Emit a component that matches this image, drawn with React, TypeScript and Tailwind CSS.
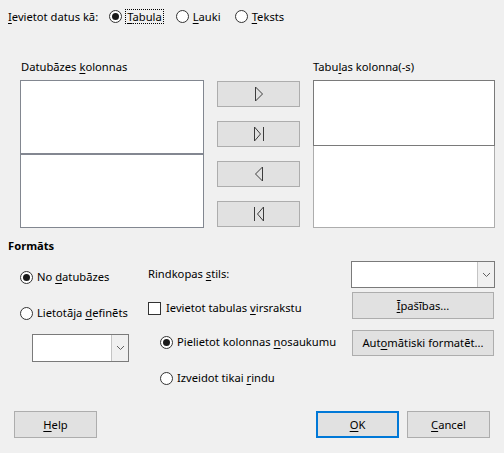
import React from "react";

const Radio = ({ checked }: { checked?: boolean }) => (
  <span className="flex h-[13px] w-[13px] shrink-0 items-center justify-center rounded-full border border-[#333333] bg-white">
    {checked && <span className="h-[7px] w-[7px] rounded-full bg-[#1a1a1a]" />}
  </span>
);

const Btn = ({ children, className = "" }: { children: React.ReactNode; className?: string }) => (
  <div
    className={`flex items-center justify-center border border-[#adadad] bg-[#e1e1e1] text-black ${className}`}
  >
    {children}
  </div>
);

const Combo = ({ className = "" }: { className?: string }) => (
  <div className={`flex border border-[#7a7a7a] bg-white ${className}`}>
    <div className="flex-1" />
    <div className="flex w-[17px] items-center justify-center border-l border-[#c4c4c4] bg-[#f0f0f0]">
      <svg width="9" height="6" viewBox="0 0 9 6">
        <path d="M1 1 L4.5 4.5 L8 1" fill="none" stroke="#606060" strokeWidth="1" />
      </svg>
    </div>
  </div>
);

const Arrow = ({ kind }: { kind: "r" | "rr" | "l" | "ll" }) => (
  <svg width="14" height="16" viewBox="0 0 14 16">
    {kind === "r" && <path d="M3.5 1 L3.5 15 L10.5 8 Z" fill="none" stroke="#3c3c3c" />}
    {kind === "rr" && (
      <>
        <path d="M2.5 1 L2.5 15 L8.5 8 Z" fill="none" stroke="#3c3c3c" />
        <path d="M11.5 1 L11.5 15" stroke="#3c3c3c" />
      </>
    )}
    {kind === "l" && <path d="M10.5 1 L10.5 15 L3.5 8 Z" fill="none" stroke="#3c3c3c" />}
    {kind === "ll" && (
      <>
        <path d="M11.5 1 L11.5 15 L5.5 8 Z" fill="none" stroke="#3c3c3c" />
        <path d="M2.5 1 L2.5 15" stroke="#3c3c3c" />
      </>
    )}
  </svg>
);

const U = ({ children }: { children: React.ReactNode }) => (
  <span className="underline decoration-1 underline-offset-[2px]">{children}</span>
);

export default function App() {
  return (
    <div
      className="flex h-[453px] w-[504px] flex-col bg-[#f0f0f0] text-[11.2px] leading-[16px] text-black"
      style={{ fontFamily: '"Noto Sans", "Open Sans", sans-serif' }}
    >
      {/* insert as */}
      <div className="flex h-[33px] items-center pl-[8px]">
        <span>
          <U>I</U>evietot datus kā:
        </span>
        <span className="ml-[11px] flex items-center gap-[3px]">
          <Radio checked />
          <span className="border border-dotted border-black px-[1px] leading-[13px]">
            <U>T</U>abula
          </span>
        </span>
        <span className="ml-[12px] flex items-center gap-[4px]">
          <Radio />
          <span>
            <U>L</U>auki
          </span>
        </span>
        <span className="ml-[14px] flex items-center gap-[4px]">
          <Radio />
          <span>
            <U>T</U>eksts
          </span>
        </span>
      </div>

      {/* columns */}
      <div className="mt-[26px] flex pl-[20px]">
        <div className="flex flex-col">
          <div className="mb-[5px] pl-[1px]">
            Datubāzes <U>k</U>olonnas
          </div>
          <div className="flex h-[148px] w-[184px] flex-col border border-[#828790] bg-white">
            <div className="h-[72px]" />
            <div className="h-[2px] bg-[#838791]" />
          </div>
        </div>

        <div className="ml-[13px] mt-[22px] flex flex-col gap-[14px]">
          <Btn className="h-[26px] w-[83px]">
            <Arrow kind="r" />
          </Btn>
          <Btn className="h-[26px] w-[83px]">
            <Arrow kind="rr" />
          </Btn>
          <Btn className="h-[26px] w-[83px]">
            <Arrow kind="l" />
          </Btn>
          <Btn className="h-[26px] w-[83px]">
            <Arrow kind="ll" />
          </Btn>
        </div>

        <div className="ml-[13px] flex flex-col">
          <div className="mb-[5px]">
            Tabu<U>l</U>as kolonna(-s)
          </div>
          <div className="h-[66px] w-[182px] border border-[#7a7a7a] bg-white" />
          <div className="h-[82px] w-[182px] border border-t-0 border-[#adadad] bg-white" />
        </div>
      </div>

      {/* format */}
      <div className="mt-[10px] pl-[8px] font-bold">Formāts</div>
      <div className="flex">
        <div className="flex w-[148px] flex-col pl-[20px]">
          <div className="mt-[15px] flex items-center gap-[4px]">
            <Radio checked />
            <span>
              No <U>d</U>atubāzes
            </span>
          </div>
          <div className="mt-[20px] flex items-center gap-[4px]">
            <Radio />
            <span>
              Lietotāja <U>d</U>efinēts
            </span>
          </div>
          <Combo className="ml-[12px] mt-[13px] h-[28px] w-[97px]" />
        </div>

        <div className="flex w-[203px] flex-col">
          <div className="mt-[12px]">
            Rindkopas <U>s</U>tils:
          </div>
          <div className="mt-[18px] flex items-center gap-[5px]">
            <span className="h-[13px] w-[13px] border border-[#333333] bg-white" />
            <span>
              Ievietot tabulas <U>v</U>irsrakstu
            </span>
          </div>
          <div className="ml-[12px] mt-[18px] flex items-center gap-[4px]">
            <Radio checked />
            <span>
              Pielietot kolonnas <U>n</U>osaukumu
            </span>
          </div>
          <div className="ml-[12px] mt-[20px] flex items-center gap-[4px]">
            <Radio />
            <span>
              Izveidot tikai <U>r</U>indu
            </span>
          </div>
        </div>

        <div className="flex flex-col">
          <Combo className="mt-[7px] h-[27px] w-[144px]" />
          <Btn className="ml-[1px] mt-[4px] h-[27px] w-[142px]">
            <span>
              <U>Ī</U>pašības...
            </span>
          </Btn>
          <Btn className="ml-[1px] mt-[11px] h-[26px] w-[142px]">
            <span>
              Aut<U>o</U>mātiski formatēt...
            </span>
          </Btn>
        </div>
      </div>

      {/* bottom */}
      <div className="mt-auto mb-[15px] flex px-[14px]">
        <Btn className="h-[27px] w-[83px]">
          <span>
            <U>H</U>elp
          </span>
        </Btn>
        <div className="flex-1" />
        <div className="flex h-[27px] w-[83px] items-center justify-center border-2 border-[#0078d7] bg-[#e1e1e1]">
          <span>
            <U>O</U>K
          </span>
        </div>
        <Btn className="ml-[8px] h-[27px] w-[83px]">
          <span>
            <U>C</U>ancel
          </span>
        </Btn>
      </div>
    </div>
  );
}
